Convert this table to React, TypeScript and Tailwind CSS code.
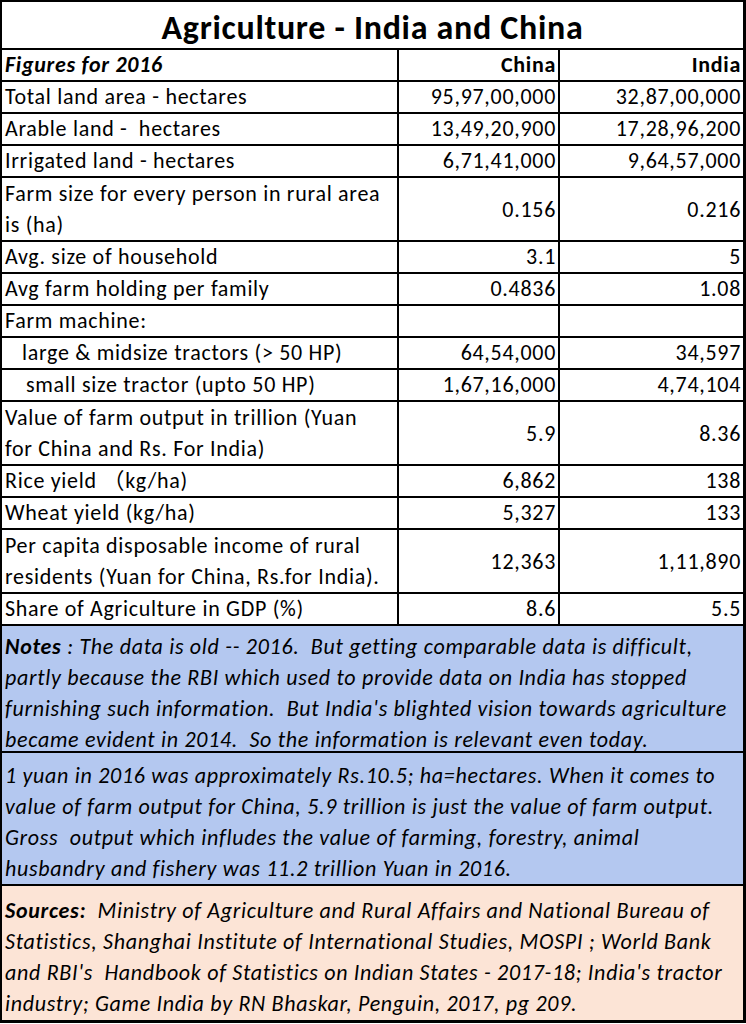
const font = 'font-["Carlito","Lato","Noto_Sans_CJK_SC",sans-serif]';

type Row = {
  label: string[];
  china: string;
  india: string;
  indent?: string;
};

const rows: Row[] = [
  { label: ['Total land area - hectares'], china: '95,97,00,000', india: '32,87,00,000' },
  { label: ['Arable land -  hectares'], china: '13,49,20,900', india: '17,28,96,200' },
  { label: ['Irrigated land - hectares'], china: '6,71,41,000', india: '9,64,57,000' },
  { label: ['Farm size for every person in rural area', 'is (ha)'], china: '0.156', india: '0.216' },
  { label: ['Avg. size of household'], china: '3.1', india: '5' },
  { label: ['Avg farm holding per family'], china: '0.4836', india: '1.08' },
  { label: ['Farm machine:'], china: '', india: '' },
  { label: ['large & midsize tractors (> 50 HP)'], china: '64,54,000', india: '34,597', indent: 'pl-[20px]' },
  { label: ['small size tractor (upto 50 HP)'], china: '1,67,16,000', india: '4,74,104', indent: 'pl-[24px]' },
  { label: ['Value of farm output in trillion (Yuan', 'for China and Rs. For India)'], china: '5.9', india: '8.36' },
  { label: ['Rice yield （kg/ha)'], china: '6,862', india: '138' },
  { label: ['Wheat yield (kg/ha)'], china: '5,327', india: '133' },
  { label: ['Per capita disposable income of rural', 'residents (Yuan for China, Rs.for India).'], china: '12,363', india: '1,11,890' },
  { label: ['Share of Agriculture in GDP (%)'], china: '8.6', india: '5.5' },
];

function DataRow({ row }: { row: Row }) {
  const tall = row.label.length > 1;
  const h = tall ? 'h-[64px] leading-[31px]' : 'h-[32px] leading-[30px]';
  return (
    <>
      <div className={`${h} border-r-2 border-b-2 border-black ${row.indent ?? 'pl-[3px]'} flex flex-col justify-center whitespace-pre`}>
        {row.label.map((l) => (
          <span key={l}>{l}</span>
        ))}
      </div>
      <div className={`${h} border-r-2 border-b-2 border-black pr-[2px] flex items-center justify-end`}>{row.china}</div>
      <div className={`${h} border-b-2 border-black pr-[2px] flex items-center justify-end`}>{row.india}</div>
    </>
  );
}

export default function App() {
  return (
    <div className={`w-[746px] bg-white text-black ${font}`}>
      <div className="border-l-2 border-t-2 border-r-[3px] border-black">
        <div className="h-[48px] pt-[4px] border-b-2 border-black flex items-center justify-center text-[34px] tracking-[0.7px] font-bold">
          Agriculture - India and China
        </div>
        <div className="grid grid-cols-[397px_161px_183px] text-[22px] tracking-[0.7px]">
          <div className="h-[32px] leading-[30px] border-r-2 border-b-2 border-black pl-[3px] font-bold italic">
            Figures for 2016
          </div>
          <div className="h-[32px] leading-[30px] border-r-2 border-b-2 border-black pr-[2px] text-right font-bold">China</div>
          <div className="h-[32px] leading-[30px] border-b-2 border-black pr-[2px] text-right font-bold">India</div>
          {rows.map((r) => (
            <DataRow key={r.label[0]} row={r} />
          ))}
          <div className="col-span-3 h-[127px] bg-[#b4c8f0] border-b-2 border-black pl-[3px] pt-[5px] leading-[31px] italic whitespace-pre flex flex-col">
            <span>
              <b>Notes</b> : The data is old -- 2016.  But getting comparable data is difficult,
            </span>
            <span>partly because the RBI which used to provide data on India has stopped</span>
            <span>furnishing such information.  But India's blighted vision towards agriculture</span>
            <span>became evident in 2014.  So the information is relevant even today.</span>
          </div>
          <div className="col-span-3 h-[133px] bg-[#b4c8f0] border-b-2 border-black pl-[3px] pt-[7px] leading-[31px] italic whitespace-pre flex flex-col">
            <span>1 yuan in 2016 was approximately Rs.10.5; ha=hectares. When it comes to</span>
            <span>value of farm output for China, 5.9 trillion is just the value of farm output.</span>
            <span>Gross  output which infludes the value of farming, forestry, animal</span>
            <span>husbandry and fishery was 11.2 trillion Yuan in 2016.</span>
          </div>
          <div className="col-span-3 h-[137px] bg-[#fce4d6] border-b-[3px] border-black pl-[3px] pt-[9px] leading-[31px] italic whitespace-pre flex flex-col">
            <span>
              <b>Sources:</b>  Ministry of Agriculture and Rural Affairs and National Bureau of
            </span>
            <span>Statistics, Shanghai Institute of International Studies, MOSPI ; World Bank</span>
            <span>and RBI's  Handbook of Statistics on Indian States - 2017-18; India's tractor</span>
            <span>industry; Game India by RN Bhaskar, Penguin, 2017, pg 209.</span>
          </div>
        </div>
      </div>
    </div>
  );
}
